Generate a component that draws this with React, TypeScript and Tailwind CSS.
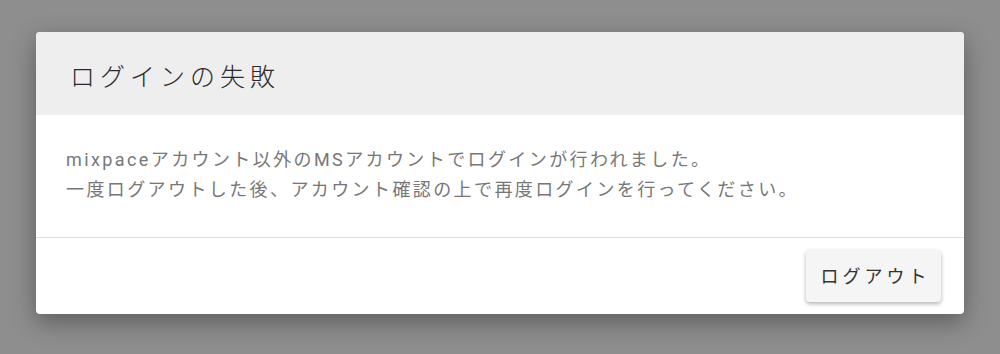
export default function App() {
  return (
    <div
      className="w-[1000px] h-[354px] bg-[#8e8e8e] pt-[32px] pl-[36px]"
      style={{ fontFamily: 'Roboto, "Noto Sans CJK JP", sans-serif' }}>
      <div className="w-[928px] h-[282px] bg-white rounded-[4px] overflow-hidden flex flex-col shadow-[0_8px_24px_rgba(0,0,0,0.35)]">
        <div className="h-[83px] bg-[#eeeeee] flex items-center pl-[34px] pt-[8px] shrink-0">
          <h2 className="text-[25px] font-light text-[#2a2a2a] tracking-[5px]">ログインの失敗</h2>
        </div>
        <div className="h-[123px] pl-[30px] pt-[30px] text-[18px] leading-[30px] text-[#777777] tracking-[2.4px] border-b border-[#dddddd] shrink-0">
          <p>mixpaceアカウント以外のMSアカウントでログインが行われました。</p>
          <p>一度ログアウトした後、アカウント確認の上で再度ログインを行ってください。</p>
        </div>
        <div className="flex-1 flex justify-end items-start pt-[12px] pr-[23px]">
          <button className="w-[135px] h-[52px] rounded-[4px] bg-[#f5f5f5] text-[18px] text-[#333333] shadow-[0_2px_4px_rgba(0,0,0,0.3)] tracking-[4px] pl-[4px]">
            ログアウト
          </button>
        </div>
      </div>
    </div>
  );
}
